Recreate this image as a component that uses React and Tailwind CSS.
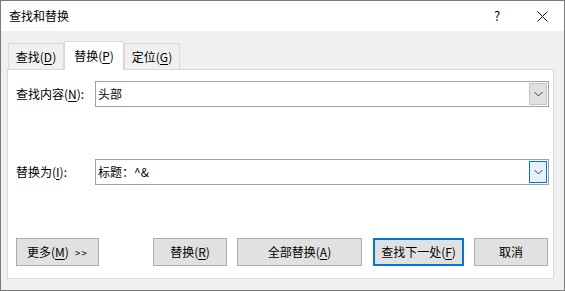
import React from 'react';

const font = { fontFamily: '"Noto Sans CJK SC", "Liberation Sans", sans-serif' };

const Chevron = () => (
  <svg width="9" height="6" viewBox="0 0 9 6" fill="none">
    <path d="M0.5 1 L4.5 5 L8.5 1" stroke="#444" strokeWidth="1" />
  </svg>
);

const CloseX = () => (
  <svg width="11" height="11" viewBox="0 0 11 11" fill="none">
    <path d="M0.5 0.5 L10.5 10.5 M10.5 0.5 L0.5 10.5" stroke="#111" strokeWidth="1" />
  </svg>
);

const Key = ({ children }) => <span className="underline underline-offset-2">{children}</span>;

const Combo = ({ value, focused }) => (
  <div className="flex-1 h-[26px] border border-[#a0a0a0] bg-white flex items-center">
    <span className="flex-1 pl-[2px] text-[12px] text-black">{value}</span>
    <div
      className={
        focused
          ? 'w-[18px] h-[22px] mr-px flex items-center justify-center bg-[#e5f1fb] border border-[#0078d7]'
          : 'w-[18px] h-[22px] mr-px flex items-center justify-center bg-[#e1e1e1] border border-[#c4c4c4]'
      }
    >
      <Chevron />
    </div>
  </div>
);

const Btn = ({ w, focused, children }) => (
  <div
    className={
      focused
        ? `${w} h-[28px] flex items-center justify-center bg-[#e1e1e1] border-2 border-[#0078d7] text-[12px] text-black`
        : `${w} h-[28px] flex items-center justify-center bg-[#e1e1e1] border border-[#adadad] text-[12px] text-black`
    }
  >
    {children}
  </div>
);

export default function App() {
  return (
    <div className="w-[565px] h-[291px] flex flex-col border border-[#7a7a7a] bg-[#f0f0f0] text-black" style={font}>
      {/* Title bar */}
      <div className="h-[30px] bg-white flex items-center pl-[8px] text-[12px]">
        <span className="flex-1">查找和替换</span>
        <span className="w-[20px] text-center mr-[25px] text-[13px]">?</span>
        <span className="w-[20px] flex justify-center mr-[12px]">
          <CloseX />
        </span>
      </div>

      <div className="flex-1 flex flex-col pl-[6px] pr-[10px] pt-[9px]">
        {/* Tabs */}
        <div className="flex items-end h-[29px] pl-px">
          <div className="w-[56px] h-[26px] border border-[#d9d9d9] border-b-0 flex items-center justify-center text-[12px]">
            查找(<Key>D</Key>)
          </div>
          <div className="w-[60px] h-[29px] -mb-px relative z-10 bg-white border border-[#d9d9d9] border-b-0 flex items-center justify-center text-[12px]">
            替换(<Key>P</Key>)
          </div>
          <div className="w-[56px] h-[26px] border border-[#d9d9d9] border-b-0 flex items-center justify-center text-[12px]">
            定位(<Key>G</Key>)
          </div>
        </div>

        {/* Panel */}
        <div className="h-[210px] bg-white border border-[#d9d9d9] flex flex-col pl-[8px] pr-[4px] pt-[11px]">
          <div className="flex items-center">
            <span className="w-[79px] text-[12px]">查找内容(<Key>N</Key>):</span>
            <Combo value="头部" />
          </div>
          <div className="flex items-center mt-[52px]">
            <span className="w-[79px] text-[12px]">替换为(<Key>I</Key>):</span>
            <Combo value="标题：^&" focused />
          </div>
          <div className="flex items-center mt-[53px]">
            <Btn w="w-[83px]">
              更多(<Key>M</Key>)<span className="ml-[6px] text-[10px] tracking-[1px]">&gt;&gt;</span>
            </Btn>
            <div className="w-[54px]" />
            <Btn w="w-[74px]">替换(<Key>R</Key>)</Btn>
            <div className="w-[10px]" />
            <Btn w="w-[125px]">全部替换(<Key>A</Key>)</Btn>
            <div className="w-[11px]" />
            <Btn w="w-[91px]" focused>查找下一处(<Key>F</Key>)</Btn>
            <div className="w-[10px]" />
            <Btn w="w-[74px]">取消</Btn>
          </div>
        </div>
      </div>
    </div>
  );
}
